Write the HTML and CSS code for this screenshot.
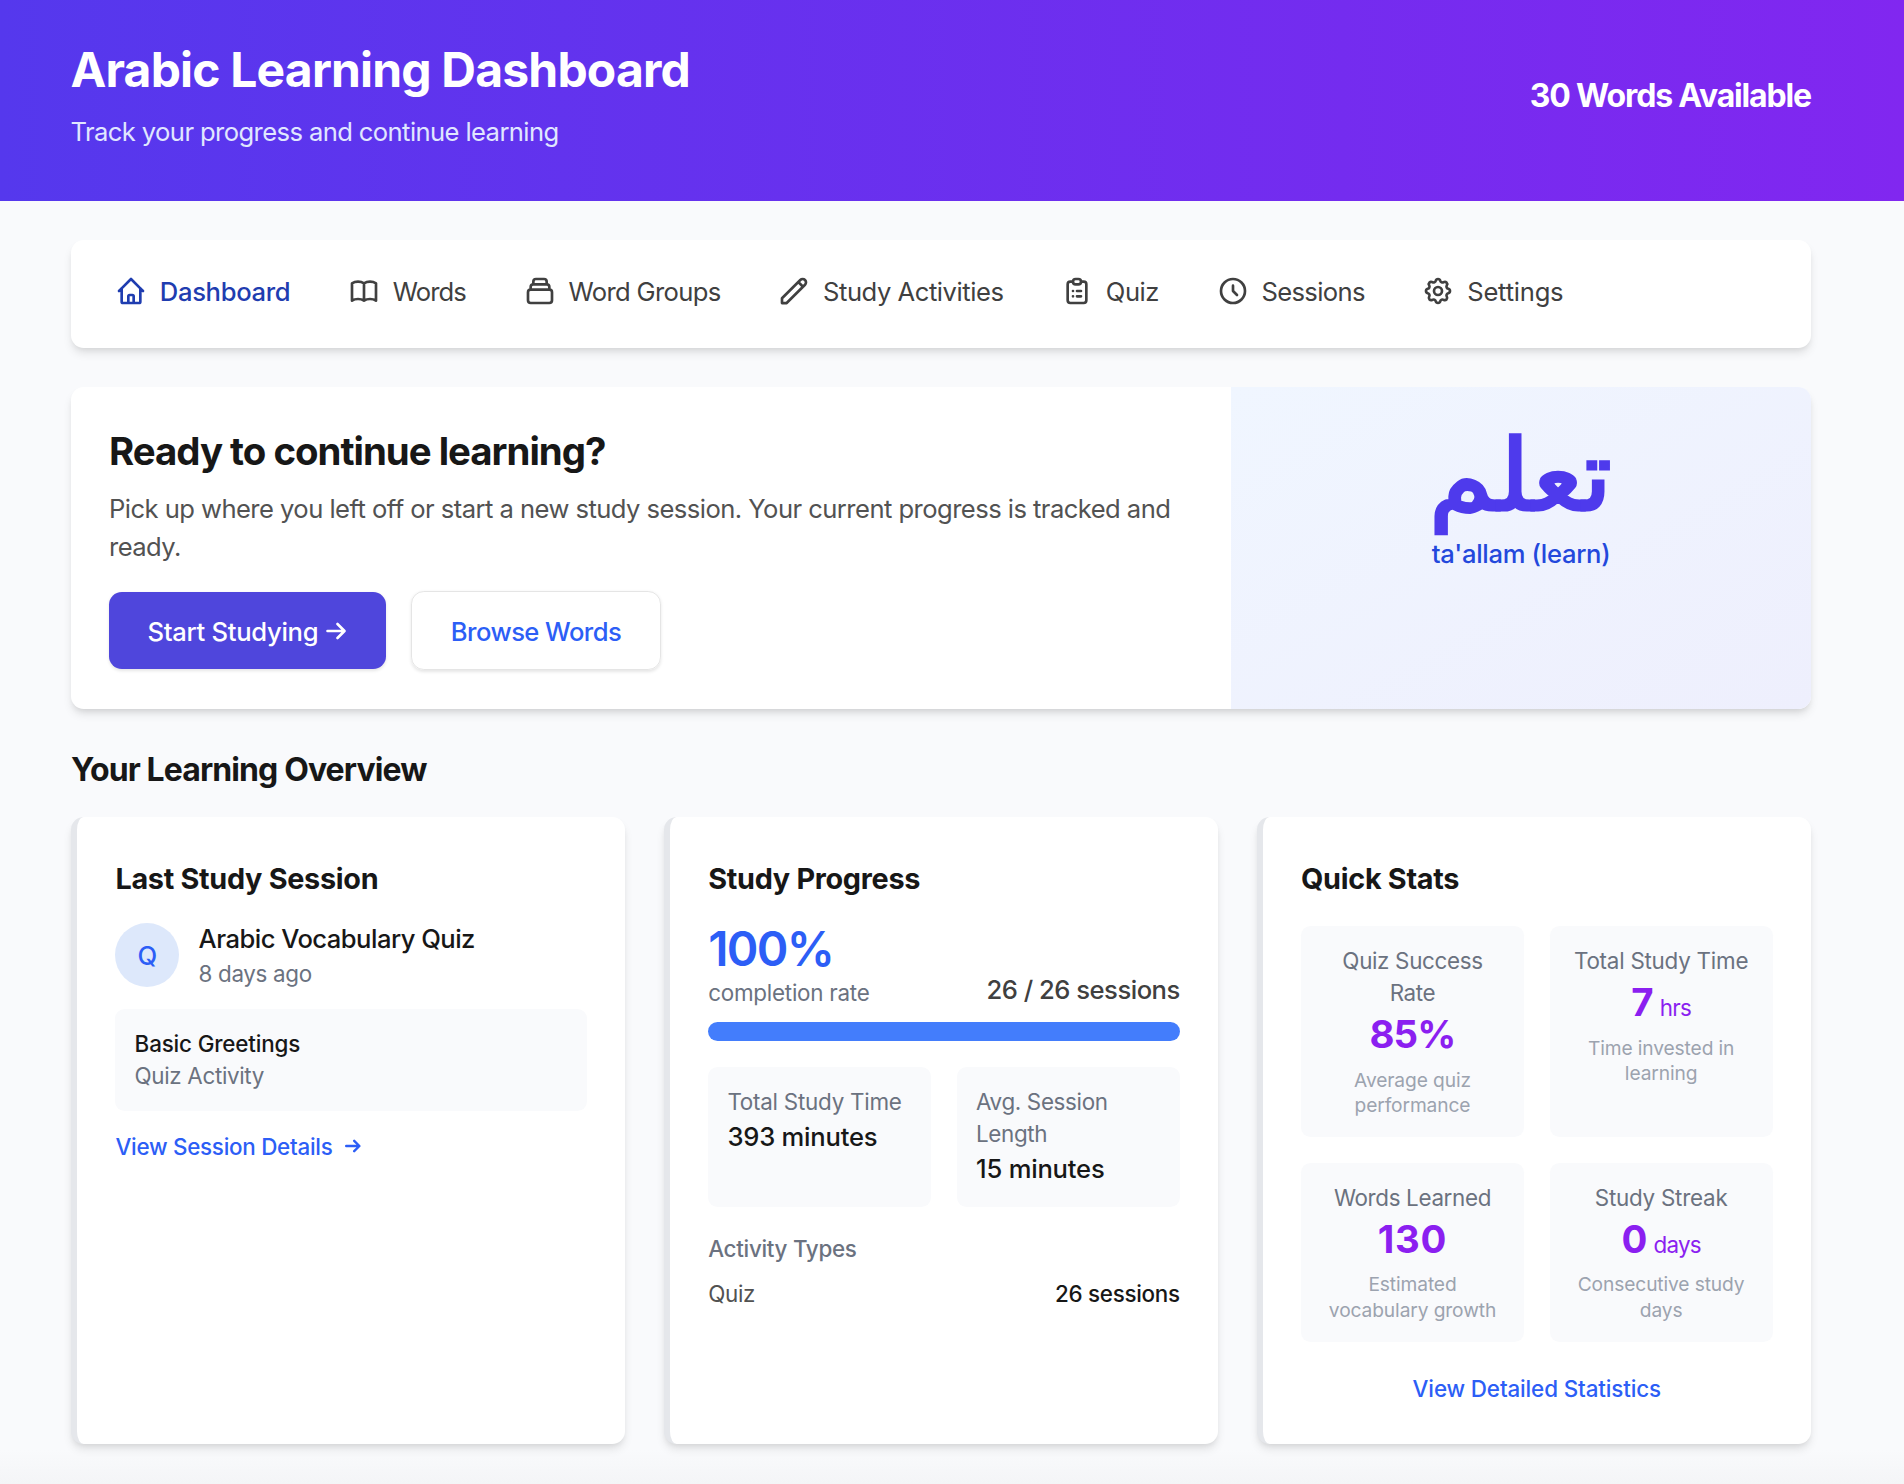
FILE: index.html
```html
<!DOCTYPE html>
<html lang="en">
<head>
<meta charset="utf-8">
<title>Arabic Learning Dashboard</title>
<link rel="stylesheet" href="styles.css">
</head>
<body>
<header class="header">
  <div>
    <h1 class="header-title">Arabic Learning Dashboard</h1>
    <p class="header-sub">Track your progress and continue learning</p>
  </div>
  <p class="header-count">30 Words Available</p>
</header>

<main class="main">
  <nav class="nav">
    <a class="nav-item active"><svg class="icon" viewBox="0 0 24 24"><path d="M3 12l2-2m0 0l7-7 7 7M5 10v10a1 1 0 001 1h3m10-11l2 2m-2-2v10a1 1 0 01-1 1h-3m-6 0a1 1 0 001-1v-4a1 1 0 011-1h2a1 1 0 011 1v4a1 1 0 001 1m-6 0h6"/></svg><span>Dashboard</span></a>
    <a class="nav-item"><svg class="icon" viewBox="0 0 24 24"><path d="M12 6.253v13m0-13C10.832 5.477 9.246 5 7.5 5S4.168 5.477 3 6.253v13C4.168 18.477 5.754 18 7.5 18s3.332.477 4.5 1.253m0-13C13.168 5.477 14.754 5 16.5 5c1.747 0 3.332.477 4.5 1.253v13C19.832 18.477 18.247 18 16.5 18c-1.746 0-3.332.477-4.5 1.253"/></svg><span class="tight-2">Words</span></a>
    <a class="nav-item"><svg class="icon" viewBox="0 0 24 24"><path d="M19 11H5m14 0a2 2 0 012 2v6a2 2 0 01-2 2H5a2 2 0 01-2-2v-6a2 2 0 012-2m14 0V9a2 2 0 00-2-2M5 11V9a2 2 0 012-2m0 0V5a2 2 0 012-2h6a2 2 0 012 2v2M7 7h10"/></svg><span class="tight-1">Word Groups</span></a>
    <a class="nav-item"><svg class="icon" viewBox="0 0 24 24"><path d="M15.232 5.232l3.536 3.536m-2.036-5.036a2.5 2.5 0 113.536 3.536L6.5 21.036H3v-3.572L16.732 3.732z"/></svg><span>Study Activities</span></a>
    <a class="nav-item"><svg class="icon" viewBox="0 0 24 24"><path d="M9 5H7a2 2 0 00-2 2v12a2 2 0 002 2h10a2 2 0 002-2V7a2 2 0 00-2-2h-2M9 5a2 2 0 002 2h2a2 2 0 002-2M9 5a2 2 0 012-2h2a2 2 0 012 2m-3 7h3m-3 4h3m-6-4h.01M9 16h.01"/></svg><span>Quiz</span></a>
    <a class="nav-item"><svg class="icon" viewBox="0 0 24 24"><path d="M12 8v4l3 3m6-3a9 9 0 11-18 0 9 9 0 0118 0z"/></svg><span class="tight-1">Sessions</span></a>
    <a class="nav-item"><svg class="icon" viewBox="0 0 24 24"><path d="M10.325 4.317c.426-1.756 2.924-1.756 3.35 0a1.724 1.724 0 002.573 1.066c1.543-.94 3.31.826 2.37 2.37a1.724 1.724 0 001.065 2.572c1.756.426 1.756 2.924 0 3.35a1.724 1.724 0 00-1.066 2.573c.94 1.543-.826 3.31-2.37 2.37a1.724 1.724 0 00-2.572 1.065c-.426 1.756-2.924 1.756-3.35 0a1.724 1.724 0 00-2.573-1.066c-1.543.94-3.31-.826-2.37-2.37a1.724 1.724 0 00-1.065-2.572c-1.756-.426-1.756-2.924 0-3.35a1.724 1.724 0 001.066-2.573c-.94-1.543.826-3.31 2.37-2.37.996.608 2.296.07 2.572-1.065z"/><path d="M15 12a3 3 0 11-6 0 3 3 0 016 0z"/></svg><span class="loose">Settings</span></a>
  </nav>

  <section class="hero">
    <div class="hero-text">
      <h2 class="hero-title">Ready to continue learning?</h2>
      <p class="hero-desc">Pick up where you left off or start a new study session. Your current progress is tracked and ready.</p>
      <div class="hero-actions">
        <a class="btn btn-primary">Start Studying<svg class="arrow" viewBox="0 0 20 20"><path d="M1.5 10h16M11.5 3l7 7-7 7"/></svg></a>
        <a class="btn btn-outline">Browse Words</a>
      </div>
    </div>
    <div class="hero-word">
      <div class="arabic" lang="ar" dir="rtl">تعلم</div>
      <p class="translit">ta'allam (learn)</p>
    </div>
  </section>

  <h2 class="section-title">Your Learning Overview</h2>

  <div class="cards">
    <section class="card">
      <h3 class="card-title">Last Study Session</h3>
      <div class="session">
        <div class="avatar">Q</div>
        <div>
          <p class="session-name">Arabic Vocabulary Quiz</p>
          <p class="muted">8 days ago</p>
        </div>
      </div>
      <div class="panel">
        <p class="panel-name">Basic Greetings</p>
        <p class="muted">Quiz Activity</p>
      </div>
      <a class="link link-session">View Session Details<svg class="arrow arrow-small" viewBox="0 0 20 20"><path d="M1.5 10h16M11.5 3.5l6.5 6.5-6.5 6.5"/></svg></a>
    </section>

    <section class="card">
      <h3 class="card-title">Study Progress</h3>
      <div class="progress-head">
        <div>
          <p class="percent">100%</p>
          <p class="muted label">completion rate</p>
        </div>
        <p class="count">26 / 26 sessions</p>
      </div>
      <div class="bar"><div class="bar-fill" style="width:100%"></div></div>
      <div class="pair">
        <div class="panel panel-small"><p class="muted label">Total Study Time</p><p class="value">393 minutes</p></div>
        <div class="panel panel-small"><p class="muted">Avg. Session Length</p><p class="value">15 minutes</p></div>
      </div>
      <h4 class="types-title">Activity Types</h4>
      <div class="type-row"><span>Quiz</span><span class="type-count">26 sessions</span></div>
    </section>

    <section class="card">
      <h3 class="card-title">Quick Stats</h3>
      <div class="stats">
        <div class="stat"><p class="muted">Quiz Success Rate</p><p class="stat-value">85%</p><p class="stat-note">Average quiz performance</p></div>
        <div class="stat"><p class="muted label">Total Study Time</p><p class="stat-value">7<span class="unit">hrs</span></p><p class="stat-note">Time invested in learning</p></div>
        <div class="stat"><p class="muted">Words Learned</p><p class="stat-value wide">130</p><p class="stat-note">Estimated vocabulary growth</p></div>
        <div class="stat"><p class="muted label">Study Streak</p><p class="stat-value">0<span class="unit">days</span></p><p class="stat-note">Consecutive study days</p></div>
      </div>
      <a class="link link-stats">View Detailed Statistics</a>
    </section>
  </div>
</main>
</body>
</html>
```
FILE: styles.css
```css
* { box-sizing: border-box; margin: 0; padding: 0; }

body {
  font-family: Inter, serif;
  font-size: 25.6px;
  line-height: 38.4px;
  color: #171717;
  height: 1484px;
  overflow: hidden;
  background: linear-gradient(to bottom, #f9fafc 1450px, #f4f5f7 1484px);
}

.header {
  display: flex;
  justify-content: space-between;
  align-items: center;
  height: 201px;
  padding: 41px 93px 50px 70.5px;
  background: linear-gradient(to right, #5538ed, #8127f0);
  color: #fff;
}
.header-title { font-size: 48px; line-height: 57.6px; font-weight: 700; letter-spacing: -0.017em; }
.header-sub { margin-top: 14px; color: #e0e7ff; letter-spacing: -0.0235em; }
.header-count { font-size: 32px; font-weight: 650; letter-spacing: -0.036em; }

.main { padding: 39px 93px 0 71px; }

.nav, .hero, .card {
  background: #fff;
  border-radius: 12.8px;
  box-shadow: 0 6.4px 9.6px -1.6px rgba(0, 0, 0, .1), 0 3.2px 6.4px -3.2px rgba(0, 0, 0, .1);
}
.nav {
  display: flex;
  align-items: flex-start;
  gap: 57.6px;
  height: 108px;
  padding: 31px 44px;
  color: #404040;
  letter-spacing: -0.018em;
}
.nav-item { display: flex; align-items: center; gap: 12.8px; white-space: nowrap; }
.nav-item span { padding-top: 2px; }
.nav-item.active { color: #1f3db0; font-weight: 500; letter-spacing: -0.013em; }
.nav-item .tight-1 { letter-spacing: -0.025em; }
.nav-item .tight-2 { letter-spacing: -0.034em; }
.nav-item .loose { letter-spacing: -0.009em; }
.icon, .arrow {
  fill: none;
  stroke: currentColor;
  stroke-width: 2;
  stroke-linecap: round;
  stroke-linejoin: round;
  flex: none;
}
.icon { width: 32px; height: 32px; }

.hero { display: grid; grid-template-columns: 2fr 1fr; height: 322px; margin-top: 39px; overflow: hidden; }
.hero-text { padding: 39.4px 38.4px 0 38px; }
.hero-title { font-size: 38.4px; line-height: 51.2px; font-weight: 700; letter-spacing: -0.026em; }
.hero-desc { margin: 12.4px 0 24px; color: #525252; letter-spacing: -0.0215em; }
.hero-actions { display: flex; align-items: center; gap: 25.6px; }
.btn {
  display: flex;
  align-items: center;
  height: 77px;
  padding: 3px 38.4px 0;
  border-radius: 12.8px;
  font-weight: 550;
  letter-spacing: -0.011em;
  box-shadow: 0 1.6px 3.2px rgba(0, 0, 0, .1);
}
.btn-primary { padding-right: 39.6px; background: #4f46dc; color: #fff; }
.btn-outline { height: 79px; border: 1px solid #e5e5e5; color: #2c5ef6; font-weight: 500; letter-spacing: -0.0215em; }
.arrow { width: 20px; height: 20px; margin: -1.5px 0 0 8px; stroke-width: 2.6; }
.hero-word { padding-top: 39.4px; text-align: center; background: linear-gradient(to bottom right, #f0f6ff, #eeeffd); }
.arabic { font-size: 99px; line-height: 96px; font-weight: 700; color: #4e3aec; transform: scaleX(1.05); }
.translit { margin-top: 12.8px; font-weight: 500; color: #2348dc; letter-spacing: -0.0122em; }

.section-title { margin: 39.4px 0 23.6px; font-size: 32px; line-height: 44.8px; font-weight: 650; letter-spacing: -0.028em; }

.cards { display: grid; grid-template-columns: repeat(3, 1fr); gap: 38.4px; height: 627px; }
.card { padding: 39.1px 38.4px 0; border-left: 6px solid #e5e7eb; }
.card-title { margin: 1px 0 -1px; font-size: 28.8px; line-height: 44.8px; font-weight: 650; letter-spacing: -0.01em; }
.muted { font-size: 22.4px; line-height: 32px; color: #6b7280; letter-spacing: -0.015em; }
.label { letter-spacing: -0.0105em; }

.session { display: flex; align-items: center; gap: 19.2px; margin-top: 19.2px; }
.avatar {
  display: flex;
  align-items: center;
  justify-content: center;
  width: 64px;
  height: 64px;
  padding-top: 2px;
  border-radius: 50%;
  background: #dde8fb;
  color: #2c5ef6;
  font-weight: 500;
}
.session-name { font-weight: 500; letter-spacing: -0.0208em; }
.panel { margin-top: 18.8px; padding: 19.2px; border-radius: 9.6px; background: #f9fafc; }
.panel-name { font-size: 22.4px; line-height: 32px; font-weight: 500; letter-spacing: -0.007em; }
.link { display: flex; align-items: center; font-size: 22.4px; line-height: 32px; font-weight: 500; color: #2c5ef6; }
.link-session { margin-top: 19.2px; letter-spacing: -0.0115em; }
.arrow-small { width: 16px; height: 16px; margin: -1px 0 0 12px; stroke-width: 3; }

.progress-head { display: flex; justify-content: space-between; align-items: flex-end; margin-top: 19.2px; }
.percent { font-size: 48px; line-height: 57.6px; font-weight: 600; color: #2c5ef6; letter-spacing: -0.035em; }
.count { font-weight: 500; color: #404040; letter-spacing: -0.0193em; }
.bar { height: 19.2px; margin-top: 12.4px; border-radius: 9.6px; background: #e5e7eb; overflow: hidden; }
.bar-fill { height: 100%; background: #437dfc; }
.pair { display: grid; grid-template-columns: 1fr 1fr; gap: 25.6px; margin-top: 25.6px; }
.panel-small { margin-top: 0; }
.value { font-weight: 500; letter-spacing: -0.008em; }
.types-title { margin-top: 25.4px; font-size: 22.4px; line-height: 32px; font-weight: 500; color: #6b7280; letter-spacing: -0.013em; }
.type-row { display: flex; justify-content: space-between; margin-top: 12.8px; font-size: 22.4px; line-height: 32px; color: #525252; letter-spacing: -0.0127em; }
.type-count { font-weight: 500; color: #171717; }

.stats { display: grid; grid-template-columns: 1fr 1fr; gap: 25.6px; margin-top: 25.2px; }
.stat { padding: 19.2px; border-radius: 9.6px; background: #f9fafc; text-align: center; }
.stat-value { font-size: 38.4px; line-height: 51.2px; font-weight: 700; color: #8b1ff0; letter-spacing: -0.02em; }
.wide { letter-spacing: 0.02em; }
.unit { margin-left: 7px; font-size: 22.4px; line-height: 22.4px; font-weight: 400; }
.stat-note { margin: 7.4px 0 -1px; font-size: 19.2px; line-height: 25.6px; color: #9ca3af; letter-spacing: -0.006em; }
.link-stats { justify-content: center; margin-top: 30.8px; letter-spacing: -0.0055em; }
```
